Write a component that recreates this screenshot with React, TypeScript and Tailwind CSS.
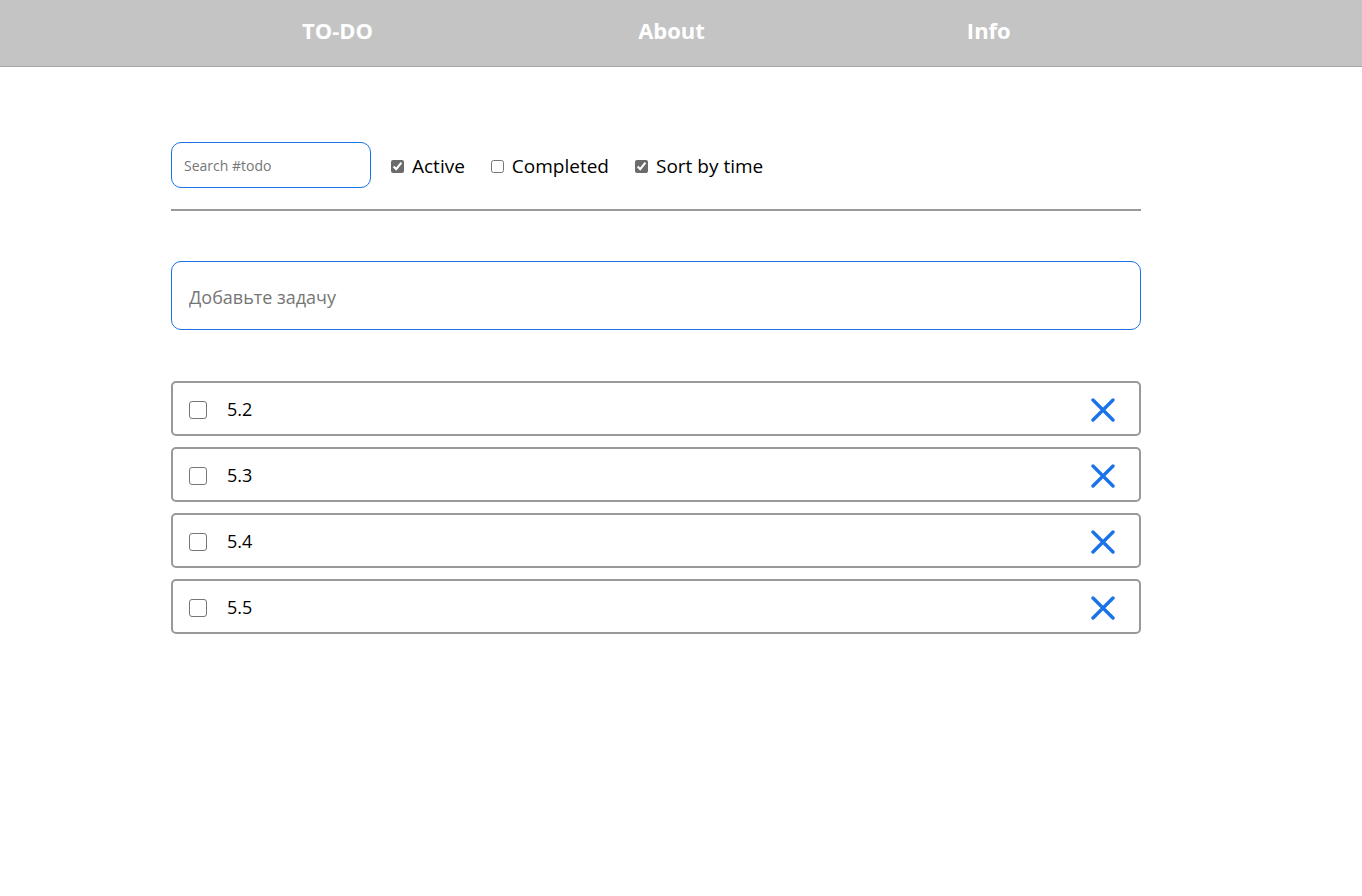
import React from 'react';

const font = { fontFamily: '"Open Sans", "Noto Sans", sans-serif' };

const todos = ['5.2', '5.3', '5.4', '5.5'];

function CloseIcon() {
  return (
    <svg width="24" height="24" viewBox="0 0 24 24" fill="none">
      <path d="M2 2 L22 22 M22 2 L2 22" stroke="#1a73e8" strokeWidth="3.4" strokeLinecap="round" />
    </svg>
  );
}

function Filter({ label, checked }: { label: string; checked: boolean }) {
  return (
    <label className="flex items-center gap-[8px] text-[19px] text-black">
      <input type="checkbox" defaultChecked={checked} className="w-[13px] h-[13px] accent-[#6b6b6b]" />
      {label}
    </label>
  );
}

export default function App() {
  return (
    <div className="min-h-[896px] bg-white" style={font}>
      <header className="h-[67px] bg-[#c4c4c4] border-b border-[#a6a6a6] flex items-center pb-[5px]">
        <nav className="flex items-center text-white font-bold text-[22px] w-full">
          <span className="ml-[302px]">TO-DO</span>
          <span className="ml-[265px]">About</span>
          <span className="ml-[262px]">Info</span>
        </nav>
      </header>

      <main className="ml-[171px] w-[970px] pt-[75px]">
        <div className="flex items-center gap-[20px]">
          <input
            placeholder="Search #todo"
            className="w-[200px] h-[46px] rounded-[10px] border border-[#1a73e8] px-[12px] pt-[1px] text-[14px] outline-none placeholder:text-[#767676]"
          />
          <div className="flex items-center gap-[26px] pt-[3px]">
            <Filter label="Active" checked />
            <Filter label="Completed" checked={false} />
            <Filter label="Sort by time" checked />
          </div>
        </div>

        <div className="mt-[21px] h-[2px] bg-[#999999]" />

        <input
          placeholder="Добавьте задачу"
          className="mt-[50px] w-full h-[69px] rounded-[10px] border border-[#1a73e8] px-[17px] pt-[3px] text-[18px] outline-none placeholder:text-[#767676]"
        />

        <ul className="mt-[51px] flex flex-col gap-[11px]">
          {todos.map(t => (
            <li
              key={t}
              className="h-[55px] rounded-[5px] border-2 border-[#999999] flex items-center pl-[16px] pr-[24px] pt-[2px]"
            >
              <span className="w-[18px] h-[18px] rounded-[3px] border border-[#767676] bg-white" />
              <span className="ml-[20px] text-[18px] text-black">{t}</span>
              <button className="ml-auto flex items-center">
                <CloseIcon />
              </button>
            </li>
          ))}
        </ul>
      </main>
    </div>
  );
}
